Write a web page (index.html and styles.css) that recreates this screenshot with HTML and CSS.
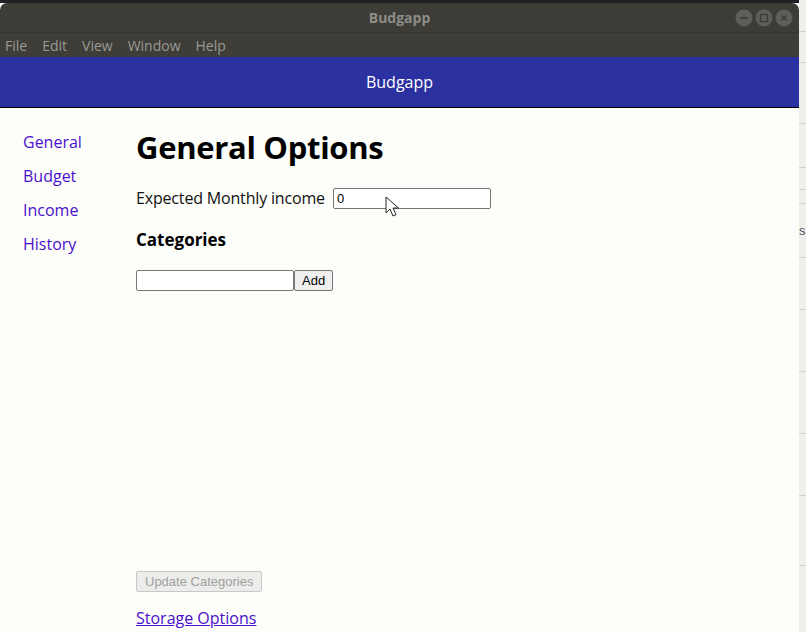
FILE: index.html
```html
<!DOCTYPE html>
<html>
<head>
<meta charset="utf-8">
<link rel="stylesheet" href="styles.css">
</head>
<body>
<div class="desktop">
  <div class="window">
    <div class="titlebar">
      <span class="title">Budgapp</span>
      <div class="controls">
        <span class="ctl"><svg width="18" height="18" viewBox="0 0 18 18"><circle cx="9" cy="9" r="8.5" fill="#5f5e59"/><path d="M5 9h8" stroke="#3a3935" stroke-width="1.5"/></svg></span>
        <span class="ctl"><svg width="18" height="18" viewBox="0 0 18 18"><circle cx="9" cy="9" r="8.5" fill="#5f5e59"/><rect x="5.5" y="5.5" width="7" height="7" fill="none" stroke="#3a3935" stroke-width="1.3"/></svg></span>
        <span class="ctl"><svg width="18" height="18" viewBox="0 0 18 18"><circle cx="9" cy="9" r="8.5" fill="#5f5e59"/><path d="M6.5 6.5l5 5M11.5 6.5l-5 5" stroke="#3a3935" stroke-width="1.3"/></svg></span>
      </div>
    </div>
    <div class="menubar">
      <span>File</span><span>Edit</span><span>View</span><span>Window</span><span>Help</span>
    </div>
    <header class="appbar">Budgapp</header>
    <div class="content">
      <nav class="sidebar">
        <a href="#">General</a>
        <a href="#">Budget</a>
        <a href="#">Income</a>
        <a href="#">History</a>
      </nav>
      <main class="main">
        <h1 class="heading">General Options</h1>
        <div class="row">
          <label class="label">Expected Monthly income</label>
          <span class="field-wrap">
            <input class="field income" type="text" value="0">
            <svg class="cursor" width="14" height="22" viewBox="0 0 14 22"><path d="M1 1v16l4-4 3 7 3-1.3-3-6.7h5.5z" fill="#fff" stroke="#222" stroke-width="1"/></svg>
          </span>
        </div>
        <h3 class="subheading">Categories</h3>
        <div class="addrow">
          <input class="field cat" type="text"><button class="btn">Add</button>
        </div>
        <div class="spacer"></div>
        <button class="btn update" disabled>Update Categories</button>
        <a class="storage" href="#">Storage Options</a>
      </main>
    </div>
  </div>
  <div class="other">
    <div class="ln" style="height:32px"></div>
    <div class="ln" style="height:31px"></div>
    <div class="ln" style="height:61px"></div>
    <div class="ln" style="height:44px"></div>
    <div class="ln" style="height:22px"></div>
    <div class="ln" style="height:14px"></div>
    <div class="ln s" style="height:54px">s</div>
    <div class="ln" style="height:52px"></div>
    <div class="ln" style="height:62px"></div>
    <div class="ln" style="height:62px"></div>
    <div class="ln" style="height:62px"></div>
    <div class="ln" style="height:70px"></div>
  </div>
</div>
</body>
</html>
```

FILE: styles.css
```css
html, body {
  margin: 0;
  padding: 0;
  width: 806px;
  height: 632px;
  overflow: hidden;
  background: #1f2024;
}
.desktop {
  display: flex;
  height: 632px;
  padding-top: 3px;
  box-sizing: border-box;
}
.window {
  width: 799px;
  flex: none;
  display: flex;
  flex-direction: column;
  background: #fdfdfa;
  font-family: "Open Sans", "Noto Sans", sans-serif;
}
.titlebar {
  height: 29px;
  background: #3d3c37;
  border-radius: 7px 7px 0 0;
  position: relative;
  display: flex;
  align-items: center;
  justify-content: center;
  border-bottom: 1px solid #35342f;
}
.title {
  color: #8e8d87;
  font-weight: bold;
  font-size: 14px;
}
.controls {
  position: absolute;
  right: 6px;
  top: 6px;
  display: flex;
  gap: 2px;
}
.ctl svg { display: block; }
.menubar {
  height: 24px;
  background: #3e3d38;
  display: flex;
  align-items: center;
  padding-left: 5px;
  gap: 15px;
  color: #9a9993;
  font-size: 14px;
}
.appbar {
  height: 50px;
  background: #2b31a1;
  color: #ffffff;
  font-size: 16px;
  display: flex;
  align-items: center;
  justify-content: center;
  border-bottom: 1px solid #000;
}
.content {
  flex: 1;
  display: flex;
  min-height: 0;
}
.sidebar {
  width: 136px;
  flex: none;
  padding: 23px 0 0 23px;
  box-sizing: border-box;
  display: flex;
  flex-direction: column;
  gap: 12px;
}
.sidebar a {
  color: #4a10cc;
  text-decoration: none;
  font-size: 16px;
  line-height: 22px;
}
.main {
  flex: 1;
  display: flex;
  flex-direction: column;
  align-items: flex-start;
  padding-top: 20px;
}
.heading {
  margin: 0;
  font-size: 31px;
  line-height: 38px;
  font-weight: bold;
  letter-spacing: -0.3px;
  color: #000;
}
.row {
  display: flex;
  align-items: center;
  margin-top: 21px;
  gap: 8px;
}
.label {
  font-size: 16px;
  letter-spacing: -0.17px;
  color: #111;
}
.field-wrap { position: relative; display: flex; }
.field {
  box-sizing: border-box;
  height: 21px;
  border: 1px solid #767676;
  border-radius: 2px;
  background: #fff;
  font-family: "Liberation Sans", sans-serif;
  font-size: 13px;
  padding: 1px 3px;
  margin: 0;
}
.income { width: 158px; }
.cursor {
  position: absolute;
  left: 52px;
  top: 8px;
}
.subheading {
  margin: 20px 0 0 0;
  font-size: 17px;
  line-height: 22px;
  font-weight: bold;
  color: #000;
}
.addrow {
  display: flex;
  margin-top: 19px;
}
.cat { width: 158px; }
.btn {
  box-sizing: border-box;
  height: 21px;
  border: 1px solid #767676;
  border-radius: 2px;
  background: #efefef;
  font-family: "Liberation Sans", sans-serif;
  font-size: 13px;
  color: #000;
  padding: 0 7px;
  margin: 0;
}
.spacer { flex: 1; }
.update {
  color: #a0a0a0;
  border-color: #c8c8c8;
  background: #ececea;
  padding: 0 8px;
}
.storage {
  margin: 15px 0 3px 0;
  color: #4a10cc;
  font-size: 16px;
  line-height: 22px;
}
.other {
  flex: 1;
  background: #efefec;
  display: flex;
  flex-direction: column;
  margin-top: -3px;
}
.ln {
  border-bottom: 1px solid #cfcfcc;
  box-sizing: border-box;
  font-family: "Liberation Sans", sans-serif;
  font-size: 13px;
  color: #555;
}
.s { display: flex; align-items: center; }
```
